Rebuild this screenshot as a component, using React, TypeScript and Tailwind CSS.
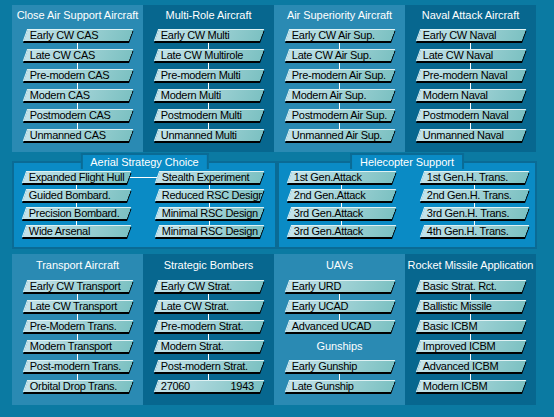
import React from 'react';

type Tone = 'light' | 'dark';

const toneBg: Record<Tone, string> = {
  light: 'bg-[#2a8ab3]',
  dark: 'bg-[#07678f]',
};

interface TechProps {
  label: string;
  right?: string;
  width?: string;
  height?: string;
}

// slanted tech button: skewed box, text kept upright inside
function Tech({ label, right, width = 'w-[106px]', height = 'h-[12px]' }: TechProps) {
  return (
    <div
      className={`${width} ${height} skew-x-[-20deg] overflow-hidden border-t border-l border-[#dff2f4] bg-linear-to-r from-[#c4e3ea] to-[#7cc1c2] shadow-[1px_2px_0_#000]`}
    >
      <div className="skew-x-[20deg] flex justify-between whitespace-nowrap pl-[4px] pr-[8px] text-[11px] leading-[11px] text-black">
        <span>{label}</span>
        {right && <span>{right}</span>}
      </div>
    </div>
  );
}

interface ChainProps {
  items: string[];
  link?: string;
  width?: string;
  last?: { label: string; right: string };
}

// vertical list of techs joined by thin white lines
function Chain({ items, link = 'h-[8px]', width, last }: ChainProps) {
  return (
    <div className="flex flex-col items-center">
      {items.map((t, i) => (
        <React.Fragment key={i}>
          {i > 0 && <div className={`w-px ${link} bg-white`} />}
          <Tech label={t} width={width} />
        </React.Fragment>
      ))}
      {last && (
        <>
          <div className={`w-px ${link} bg-white`} />
          <Tech label={last.label} right={last.right} width={width} />
        </>
      )}
    </div>
  );
}

function Title({ children }: { children: React.ReactNode }) {
  return <div className="h-[16px] leading-[16px] tracking-[-0.05px] text-white whitespace-nowrap">{children}</div>;
}

interface PanelProps {
  title: string;
  items: string[];
  tone: Tone;
  top?: boolean;
  last?: { label: string; right: string };
}

function Panel({ title, items, tone, top, last }: PanelProps) {
  return (
    <div className={`w-[131px] flex flex-col items-center ${toneBg[tone]} ${top ? 'pt-[2px]' : 'pt-[3px]'}`}>
      <Title>{title}</Title>
      <div className={top ? 'mt-[6px]' : 'mt-[7px]'}>
        <Chain items={items} last={last} />
      </div>
    </div>
  );
}

interface GroupProps {
  title: string;
  width: string;
  left: string[];
  right: string[];
  joined?: boolean;
}

// framed group with a tab label sitting on its top border
function Group({ title, width, left, right, joined }: GroupProps) {
  return (
    <div className={`relative ${width} h-[88px] border-2 border-[#0a6b95] bg-[#0a8bc5] pt-[8px] pl-[10px] flex`}>
      <div className="absolute -top-[10px] left-1/2 -translate-x-1/2 h-[16px] border-2 border-b-0 border-[#0a6b95] bg-[#0a8bc5] px-[8px] leading-[14px] tracking-[-0.05px] text-white whitespace-nowrap">
        {title}
      </div>
      <Chain items={left} link="h-[6px]" width="w-[105px]" />
      <div className="w-[28px] h-[12px] flex items-center">
        {joined && <div className="h-px w-full bg-white" />}
      </div>
      <Chain items={right} link="h-[6px]" width="w-[105px]" />
    </div>
  );
}

export default function App() {
  return (
    <div className="w-[554px] h-[417px] overflow-hidden bg-[#0b7aa2] pt-[5px] pl-[12px] font-['Liberation_Sans',Arial,sans-serif] text-[11px] tracking-[-0.3px]">
      <div className="flex h-[147px]">
        <Panel
          top
          tone="light"
          title="Close Air Support Aircraft"
          items={['Early CW CAS', 'Late CW CAS', 'Pre-modern CAS', 'Modern CAS', 'Postmodern CAS', 'Unmanned CAS']}
        />
        <Panel
          top
          tone="dark"
          title="Multi-Role Aircraft"
          items={['Early CW Multi', 'Late CW Multirole', 'Pre-modern Multi', 'Modern Multi', 'Postmodern Multi', 'Unmanned Multi']}
        />
        <Panel
          top
          tone="light"
          title="Air Superiority Aircraft"
          items={[
            'Early CW Air Sup.',
            'Late CW Air Sup.',
            'Pre-modern Air Sup.',
            'Modern Air Sup.',
            'Postmodern Air Sup.',
            'Unmanned Air Sup.',
          ]}
        />
        <Panel
          top
          tone="dark"
          title="Naval Attack Aircraft"
          items={['Early CW Naval', 'Late CW Naval', 'Pre-modern Naval', 'Modern Naval', 'Postmodern Naval', 'Unmanned Naval']}
        />
      </div>

      <div className="mt-[9px] flex">
        <Group
          joined
          width="w-[265px]"
          title="Aerial Strategy Choice"
          left={['Expanded Flight Hull', 'Guided Bombard.', 'Precision Bombard.', 'Wide Arsenal']}
          right={['Stealth Experiment', 'Reduced RSC Design', 'Minimal RSC Design', 'Minimal RSC Design']}
        />
        <Group
          width="w-[260px]"
          title="Helecopter Support"
          left={['1st Gen.Attack', '2nd Gen.Attack', '3rd Gen.Attack', '3rd Gen.Attack']}
          right={['1st Gen.H. Trans.', '2nd Gen.H. Trans.', '3rd Gen.H. Trans.', '4th Gen.H. Trans.']}
        />
      </div>

      <div className="mt-[5px] flex h-[151px]">
        <Panel
          tone="light"
          title="Transport Aircraft"
          items={[
            'Early CW Transport',
            'Late CW Transport',
            'Pre-Modern Trans.',
            'Modern Transport',
            'Post-modern Trans.',
            'Orbital Drop Trans.',
          ]}
        />
        <Panel
          tone="dark"
          title="Strategic Bombers"
          items={['Early CW Strat.', 'Late CW Strat.', 'Pre-modern Strat.', 'Modern Strat.', 'Post-modern Strat.']}
          last={{ label: '27060', right: '1943' }}
        />
        <div className={`w-[131px] flex flex-col items-center pt-[3px] ${toneBg.light}`}>
          <Title>UAVs</Title>
          <div className="mt-[7px]">
            <Chain items={['Early URD', 'Early UCAD', 'Advanced UCAD']} />
          </div>
          <div className="mt-[6px]">
            <Title>Gunships</Title>
          </div>
          <div className="mt-[6px]">
            <Chain items={['Early Gunship', 'Late Gunship']} />
          </div>
        </div>
        <Panel
          tone="dark"
          title="Rocket Missile Application"
          items={['Basic Strat. Rct.', 'Ballistic Missile', 'Basic ICBM', 'Improved ICBM', 'Advanced ICBM', 'Modern ICBM']}
        />
      </div>
    </div>
  );
}
